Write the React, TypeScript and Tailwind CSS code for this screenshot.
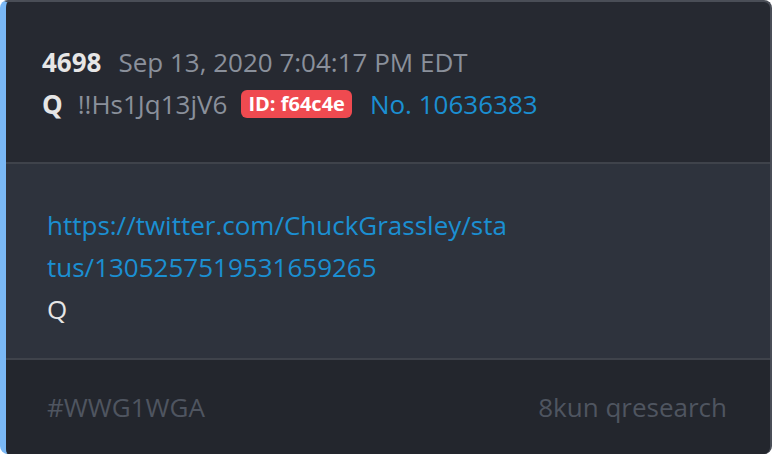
export default function App() {
  return (
    <div className="w-[772px] h-[454px] bg-[#ffffff] font-['Open_Sans',sans-serif]">
      <div className="h-full flex flex-col rounded-[8px] overflow-hidden border-t-2 border-r-2 border-[#4a4e57] border-l-[6px] border-l-[#7ab8f5] bg-[#262931]">
        <div className="h-[160px] flex flex-col justify-center pl-[36px] pt-[2px] gap-[10px] text-[26px] leading-[32px]">
          <div className="flex items-baseline gap-[17px]">
            <span className="font-bold text-[#e6e6e6]">4698</span>
            <span className="text-[#8a909b]">Sep 13, 2020 7:04:17 PM EDT</span>
          </div>
          <div className="flex items-center">
            <span className="font-bold text-[#e6e6e6]">Q</span>
            <span className="ml-[15px] text-[#8a909b]">!!Hs1Jq13jV6</span>
            <span className="ml-[14px] rounded-[6px] bg-[#ef4a50] px-[7px] h-[28px] flex items-center text-[20px] font-bold text-white">ID: f64c4e</span>
            <span className="ml-[18px] text-[#1b8fd2]">No. 10636383</span>
          </div>
        </div>
        <div className="h-[2px] bg-[#3f434b]" />
        <div className="h-[194px] bg-[#2e333d] pl-[41px] pt-[40px] text-[26px] leading-[42px]">
          <div className="w-[465px] break-all text-[#1b8fd2]">https://twitter.com/ChuckGrassley/status/1305257519531659265</div>
          <div className="text-[#e6e6e6]">Q</div>
        </div>
        <div className="h-[2px] bg-[#3f434b]" />
        <div className="flex-1 flex items-center justify-between pl-[41px] pr-[43px] text-[26px] text-[#4f5560] bg-[#23262d]">
          <span>#WWG1WGA</span>
          <span>8kun qresearch</span>
        </div>
      </div>
    </div>
  );
}
